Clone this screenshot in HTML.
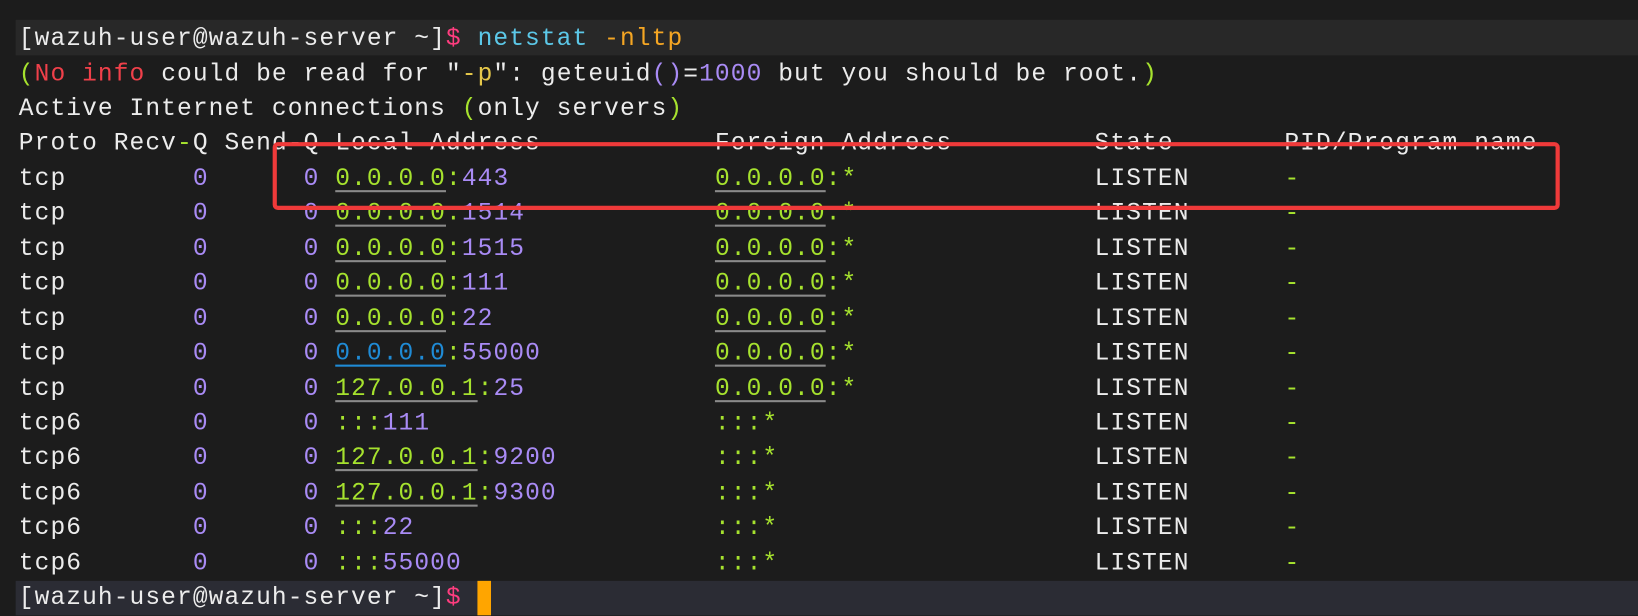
<!DOCTYPE html>
<html><head><meta charset="utf-8"><style>
html,body{margin:0;padding:0;background:#1c1c1c;width:1638px;height:612px;overflow:hidden}
#wrap{position:absolute;left:0;top:0;width:1568px;height:586px;transform:scale(1.0447);transform-origin:0 0}
.l{position:absolute;left:18px;height:34px;line-height:34px;white-space:pre;font-family:"Liberation Mono",monospace;font-size:23.5px;letter-spacing:1.04px;color:#ececec}
.c{color:#5cc8e8}.o{color:#f5a623}.p{color:#ff3d7f}.r{color:#f0404a}.g{color:#a6e22e}.v{color:#a98bf5}.y{color:#e6c84a}.b{color:#1f8bd6}
.u{text-decoration:underline;text-decoration-color:#8a8a8a;text-underline-offset:5px;text-decoration-thickness:2px}
.ub{text-decoration:underline;text-decoration-color:#1f8bd6;text-underline-offset:5px;text-decoration-thickness:2px}
.band{position:absolute;left:15px;right:0;background:#282828}
</style></head><body><div id="wrap">
<div class="band" style="top:19px;height:34px"></div>
<div class="band" style="top:556px;height:33px;background:#2b2c34"></div>
<div class="l" style="top:21px">[wazuh-user@wazuh-server ~]<span class="p">$</span> <span class="c">netstat</span> <span class="o">-nltp</span></div>
<div class="l" style="top:55px"><span class="g">(</span><span class="r">No info</span> could be read for "<span class="y">-p</span>": geteuid<span class="v">()</span>=<span class="v">1000</span> but you should be root.<span class="g">)</span></div>
<div class="l" style="top:88px">Active Internet connections <span class="g">(</span>only servers<span class="g">)</span></div>
<div class="l" style="top:121px">Proto Recv<span class="g">-</span>Q Send-Q Local Address           Foreign Address         State       PID/Program name</div>
<div class="l" style="top:155px">tcp        <span class="v">0</span>      <span class="v">0</span> <span class="g u">0.0.0.0</span><span class="g">:</span><span class="v">443</span>             <span class="g u">0.0.0.0</span><span class="g">:*</span>               LISTEN      <span class="g">-</span></div>
<div class="l" style="top:188px">tcp        <span class="v">0</span>      <span class="v">0</span> <span class="g u">0.0.0.0</span><span class="g">:</span><span class="v">1514</span>            <span class="g u">0.0.0.0</span><span class="g">:*</span>               LISTEN      <span class="g">-</span></div>
<div class="l" style="top:222px">tcp        <span class="v">0</span>      <span class="v">0</span> <span class="g u">0.0.0.0</span><span class="g">:</span><span class="v">1515</span>            <span class="g u">0.0.0.0</span><span class="g">:*</span>               LISTEN      <span class="g">-</span></div>
<div class="l" style="top:255px">tcp        <span class="v">0</span>      <span class="v">0</span> <span class="g u">0.0.0.0</span><span class="g">:</span><span class="v">111</span>             <span class="g u">0.0.0.0</span><span class="g">:*</span>               LISTEN      <span class="g">-</span></div>
<div class="l" style="top:289px">tcp        <span class="v">0</span>      <span class="v">0</span> <span class="g u">0.0.0.0</span><span class="g">:</span><span class="v">22</span>              <span class="g u">0.0.0.0</span><span class="g">:*</span>               LISTEN      <span class="g">-</span></div>
<div class="l" style="top:322px">tcp        <span class="v">0</span>      <span class="v">0</span> <span class="b ub">0.0.0.0</span><span class="g">:</span><span class="v">55000</span>           <span class="g u">0.0.0.0</span><span class="g">:*</span>               LISTEN      <span class="g">-</span></div>
<div class="l" style="top:356px">tcp        <span class="v">0</span>      <span class="v">0</span> <span class="g u">127.0.0.1</span><span class="g">:</span><span class="v">25</span>            <span class="g u">0.0.0.0</span><span class="g">:*</span>               LISTEN      <span class="g">-</span></div>
<div class="l" style="top:389px">tcp6       <span class="v">0</span>      <span class="v">0</span> <span class="g">:::</span><span class="v">111</span>                  <span class="g">:::*</span>                    LISTEN      <span class="g">-</span></div>
<div class="l" style="top:422px">tcp6       <span class="v">0</span>      <span class="v">0</span> <span class="g u">127.0.0.1</span><span class="g">:</span><span class="v">9200</span>          <span class="g">:::*</span>                    LISTEN      <span class="g">-</span></div>
<div class="l" style="top:456px">tcp6       <span class="v">0</span>      <span class="v">0</span> <span class="g u">127.0.0.1</span><span class="g">:</span><span class="v">9300</span>          <span class="g">:::*</span>                    LISTEN      <span class="g">-</span></div>
<div class="l" style="top:489px">tcp6       <span class="v">0</span>      <span class="v">0</span> <span class="g">:::</span><span class="v">22</span>                   <span class="g">:::*</span>                    LISTEN      <span class="g">-</span></div>
<div class="l" style="top:523px">tcp6       <span class="v">0</span>      <span class="v">0</span> <span class="g">:::</span><span class="v">55000</span>                <span class="g">:::*</span>                    LISTEN      <span class="g">-</span></div>
<div class="l" style="top:556px">[wazuh-user@wazuh-server ~]<span class="p">$</span></div>
<div style="position:absolute;left:457px;top:556px;width:13px;height:33px;background:#ffa500"></div>
<div style="position:absolute;left:261px;top:136px;width:1224px;height:57px;border:4px solid #f03a3a;border-radius:5px"></div>
</div></body></html>
